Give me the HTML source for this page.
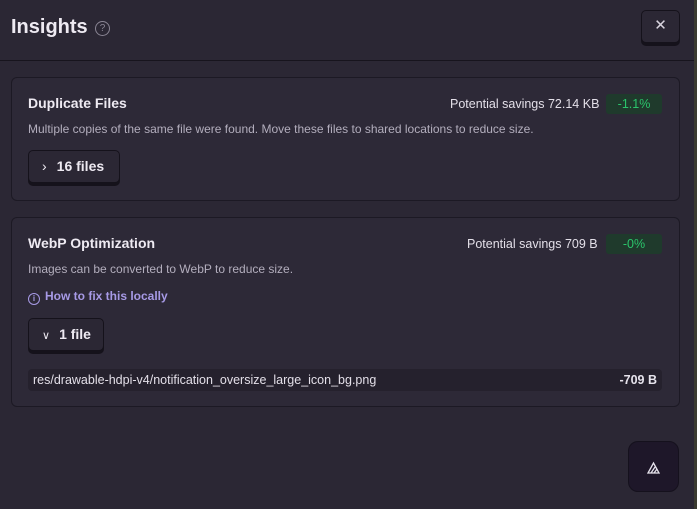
<html><head><style>
body{margin:0;width:697px;height:509px;background:#2b2734;font-family:"Liberation Sans",sans-serif;position:relative;overflow:hidden;color:#e6e3ec}
.a{position:absolute}
.card{position:absolute;left:11px;width:667px;border:1px solid #1c1924;border-radius:6px;background:#2d2937}
.t{font-size:14px;font-weight:bold;color:#eeeaf2}
.d{font-size:12px;color:#b3aebd}
.btn{position:absolute;border:1px solid #15121b;border-radius:5px;box-shadow:0 3px 0 #15121b;background:#2b2734;font-size:14px;font-weight:bold;color:#eeeaf2}
.sav{font-size:12.5px;color:#e3dfe8}
.badge{position:absolute;background:#1f3a2c;color:#2bc46b;font-size:12.5px;border-radius:3px;text-align:center;height:20px;line-height:20px}
</style></head><body>
<div class="a" style="left:11px;top:16px;font-size:20px;font-weight:bold;color:#eeeaf2">Insights</div>
<div class="a" style="left:95px;top:21px;width:13px;height:13px;border:1px solid #8a8594;border-radius:50%;font-size:10px;line-height:13px;text-align:center;color:#8a8594">?</div>
<div class="btn" style="left:641px;top:10px;width:37px;height:31px;line-height:30px;text-align:center;font-weight:normal;font-size:15px;color:#d8d4de">✕</div>
<div class="a" style="left:0;top:60px;width:694px;height:1px;background:#17141d"></div>
<div class="a" style="left:694px;top:0;width:3px;height:509px;background:#3a3a30"></div>
<div class="card" style="top:77px;height:122px">
<div class="a t" style="left:16px;top:17px">Duplicate Files</div>
<div class="a sav" style="left:438px;top:19px">Potential savings 72.14 KB</div>
<div class="badge" style="left:594px;top:16px;width:56px">-1.1%</div>
<div class="a d" style="left:16px;top:44px">Multiple copies of the same file were found. Move these files to shared locations to reduce size.</div>
<div class="btn" style="left:16px;top:72px;width:90px;height:31px;line-height:31px"><span style="font-weight:normal;margin:0 10px 0 13px">›</span>16 files</div>
</div>
<div class="card" style="top:217px;height:188px">
<div class="a t" style="left:16px;top:17px">WebP Optimization</div>
<div class="a sav" style="left:455px;top:19px">Potential savings 709 B</div>
<div class="badge" style="left:594px;top:16px;width:56px">-0%</div>
<div class="a d" style="left:16px;top:44px">Images can be converted to WebP to reduce size.</div>
<div class="a" style="left:16px;top:71px;font-size:12px;font-weight:bold;color:#a79ae6"><span style="display:inline-block;width:10px;height:10px;border:1px solid #a79ae6;border-radius:50%;font-size:8px;line-height:10px;text-align:center;vertical-align:-1px;margin-right:5px">i</span>How to fix this locally</div>
<div class="btn" style="left:16px;top:100px;width:74px;height:31px;line-height:31px"><span style="font-weight:normal;margin:0 9px 0 13px;font-size:11px">∨</span>1 file</div>
<div class="a" style="left:16px;top:151px;width:634px;height:22px;background:#25212d;border-radius:4px;font-size:12.5px;line-height:22px">
<span style="margin-left:5px;color:#e3dfe8">res/drawable-hdpi-v4/notification_oversize_large_icon_bg.png</span>
<span style="position:absolute;right:5px;font-weight:bold">-709 B</span></div>
</div>
<div class="a" style="left:628px;top:441px;width:49px;height:49px;background:#1e1729;border-radius:10px;border:1px solid #15111d">
<svg width="49" height="49" viewBox="0 0 49 49"><path d="M19 31h11l-5.5-10zM22 31l4-6M25 31l3-4" fill="none" stroke="#e6e3ec" stroke-width="1.3"/></svg></div>
</body></html>
